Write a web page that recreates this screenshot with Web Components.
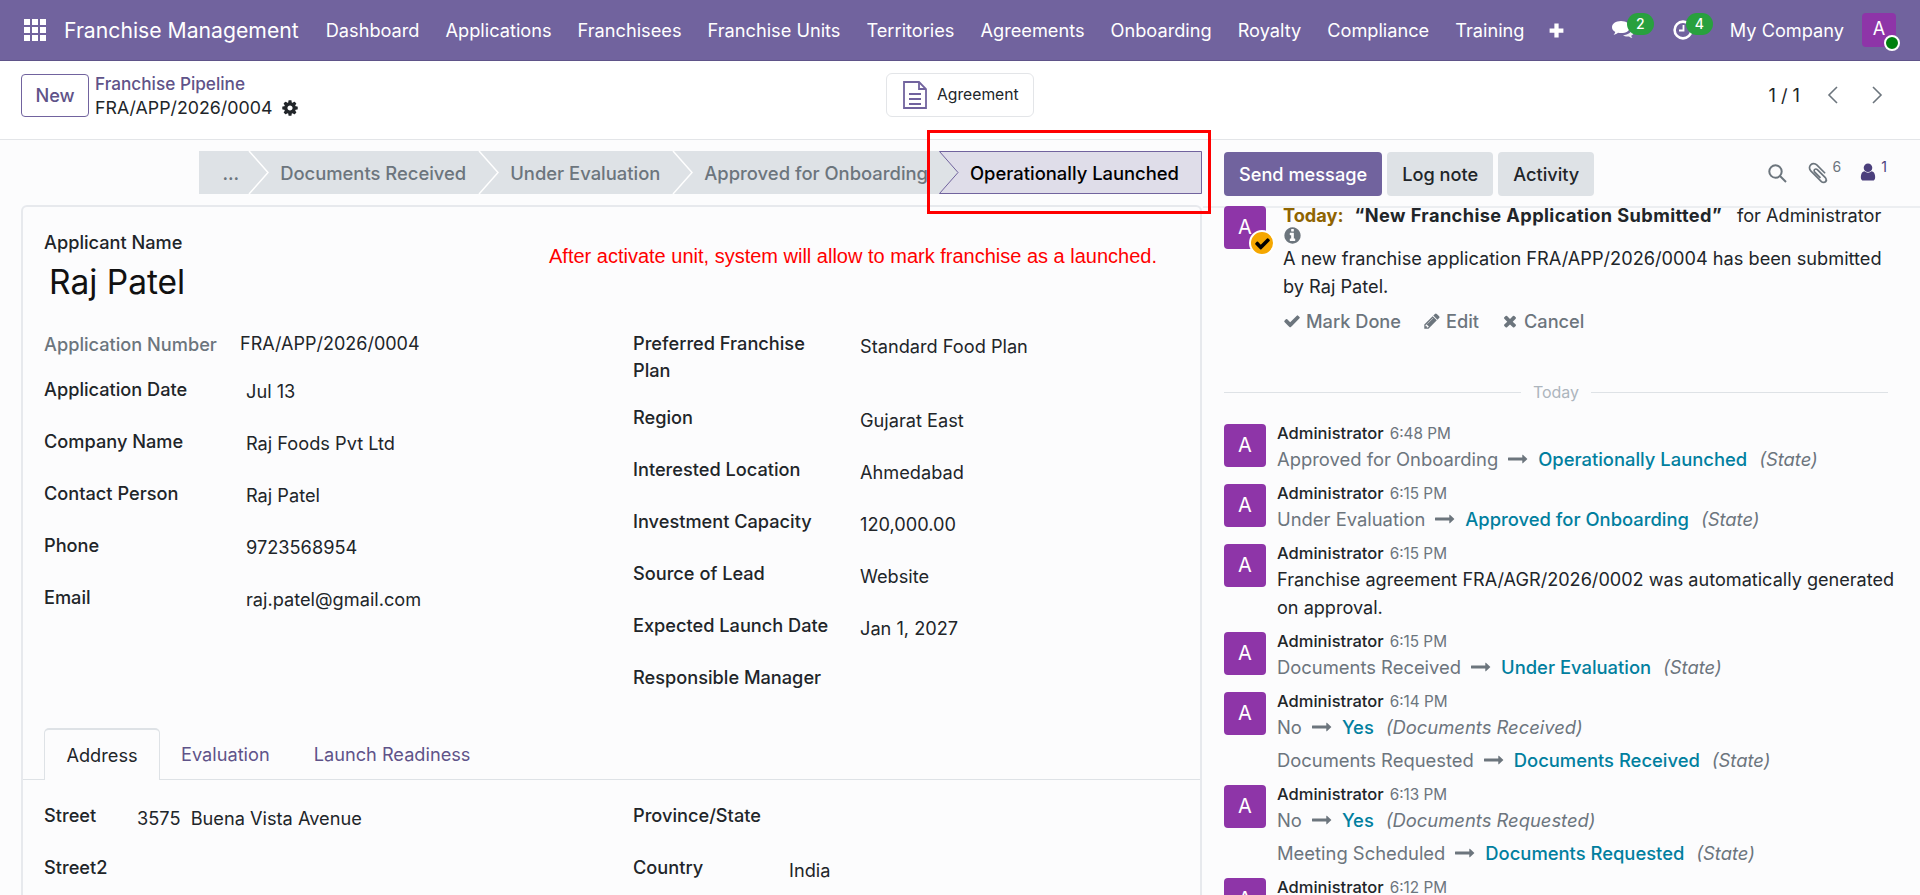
<!DOCTYPE html>
<html lang="en">
<head>
<meta charset="utf-8">
<title>Franchise Management</title>
<style>
  html, body { margin: 0; height: 100%; }
  body {
    height: 895px;
    overflow: hidden;
    background: #fcfcfd;
    color: #212529;
    font: 400 18.2px/26px Inter, "Liberation Sans", sans-serif;
  }
</style>
</head>
<body>
<fr-app>
  <fr-navbar slot="navbar">
    <fr-nav-item>Dashboard</fr-nav-item>
    <fr-nav-item>Applications</fr-nav-item>
    <fr-nav-item>Franchisees</fr-nav-item>
    <fr-nav-item>Franchise Units</fr-nav-item>
    <fr-nav-item>Territories</fr-nav-item>
    <fr-nav-item>Agreements</fr-nav-item>
    <fr-nav-item>Onboarding</fr-nav-item>
    <fr-nav-item>Royalty</fr-nav-item>
    <fr-nav-item>Compliance</fr-nav-item>
    <fr-nav-item>Training</fr-nav-item>
  </fr-navbar>
  <fr-control-panel slot="panel"></fr-control-panel>

  <fr-form slot="form">
    <fr-statusbar>
      <fr-step>...</fr-step>
      <fr-step>Documents Received</fr-step>
      <fr-step>Under Evaluation</fr-step>
      <fr-step>Approved for Onboarding</fr-step>
      <fr-step active>Operationally Launched</fr-step>
    </fr-statusbar>
    <fr-sheet>
      <fr-group slot="left">
        <fr-field label="Application Number" muted height="45" width="196" flat>FRA/APP/2026/0004</fr-field>
        <fr-field label="Application Date" width="202">Jul 13</fr-field>
        <fr-field label="Company Name" width="202">Raj Foods Pvt Ltd</fr-field>
        <fr-field label="Contact Person" width="202">Raj Patel</fr-field>
        <fr-field label="Phone" width="202">9723568954</fr-field>
        <fr-field label="Email" width="202">raj.patel@gmail.com</fr-field>
      </fr-group>
      <fr-group slot="right" raised>
        <fr-field label="Preferred Franchise Plan" height="74" width="227" tall>Standard Food Plan</fr-field>
        <fr-field label="Region" width="227">Gujarat East</fr-field>
        <fr-field label="Interested Location" width="227">Ahmedabad</fr-field>
        <fr-field label="Investment Capacity" width="227">120,000.00</fr-field>
        <fr-field label="Source of Lead" width="227">Website</fr-field>
        <fr-field label="Expected Launch Date" width="227">Jan 1, 2027</fr-field>
        <fr-field label="Responsible Manager" width="227"></fr-field>
      </fr-group>
      <fr-group slot="tab-left" raised>
        <fr-field label="Street" width="93">3575&nbsp; Buena Vista Avenue</fr-field>
        <fr-field label="Street2" width="93"></fr-field>
      </fr-group>
      <fr-group slot="tab-right" raised>
        <fr-field label="Province/State" width="156"></fr-field>
        <fr-field label="Country" width="156">India</fr-field>
      </fr-group>
    </fr-sheet>
  </fr-form>

  <fr-chatter slot="chatter">
    <fr-activity></fr-activity>
    <fr-divider>Today</fr-divider>
    <fr-message time="6:48 PM"><fr-change from="Approved for Onboarding" to="Operationally Launched" field="State"></fr-change></fr-message>
    <fr-message time="6:15 PM"><fr-change from="Under Evaluation" to="Approved for Onboarding" field="State"></fr-change></fr-message>
    <fr-message time="6:15 PM">Franchise agreement FRA/AGR/2026/0002 was automatically generated on approval.</fr-message>
    <fr-message time="6:15 PM"><fr-change from="Documents Received" to="Under Evaluation" field="State"></fr-change></fr-message>
    <fr-message time="6:14 PM">
      <fr-change from="No" to="Yes" field="Documents Received"></fr-change>
      <fr-change from="Documents Requested" to="Documents Received" field="State"></fr-change>
    </fr-message>
    <fr-message time="6:13 PM">
      <fr-change from="No" to="Yes" field="Documents Requested"></fr-change>
      <fr-change from="Meeting Scheduled" to="Documents Requested" field="State"></fr-change>
    </fr-message>
    <fr-message time="6:12 PM"></fr-message>
  </fr-chatter>
</fr-app>

<script>
// font awesome 4 shapes on a 1792 box, the rest drawn by hand
const FA = {
  check: 'M1671 566q0 40-28 68l-724 724-136 136q-28 28-68 28t-68-28l-136-136-362-362q-28-28-28-68t28-68l136-136q28-28 68-28t68 28l294 295 656-657q28-28 68-28t68 28l136 136q28 28 28 68z',
  times: 'M1490 1322q0 40-28 68l-136 136q-28 28-68 28t-68-28l-294-294-294 294q-28 28-68 28t-68-28l-136-136q-28-28-28-68t28-68l294-294-294-294q-28-28-28-68t28-68l136-136q28-28 68-28t68 28l294 294 294-294q28-28 68-28t68 28l136 136q28 28 28 68t-28 68l-294 294 294 294q28 28 28 68z',
  pencil: 'M491 1536l91-91-235-235-91 91v107h128v128h107zm523-928q0-22-22-22-10 0-17 7l-542 542q-7 7-7 17 0 22 22 22 10 0 17-7l542-542q7-7 7-17zm-54-192l416 416-832 832h-416v-416zm683 96q0 53-37 90l-166 166-416-416 166-165q36-38 90-38 53 0 91 38l235 234q37 39 37 91z',
  cog: 'M1152 896q0-106-75-181t-181-75-181 75-75 181 75 181 181 75 181-75 75-181zm512-109v222q0 12-8 23t-20 13l-185 28q-19 54-39 91 35 50 107 138 10 12 10 25t-9 23q-27 37-99 108t-94 71q-12 0-26-9l-138-108q-44 23-91 38-16 136-29 186-7 28-36 28h-222q-14 0-24.500-8.500t-11.500-21.500l-28-184q-49-16-90-37l-141 107q-10 9-25 9-14 0-25-11-126-114-165-168-7-10-7-23 0-12 8-23 15-21 51-66.500t54-70.500q-27-50-41-99l-183-27q-13-2-21-12.500t-8-23.500v-222q0-12 8-23t19-13l186-28q14-46 39-92-40-57-107-138-10-12-10-24 0-10 9-23 26-36 98.500-107.500t94.500-71.500q13 0 26 10l138 107q44-23 91-38 16-136 29-186 7-28 36-28h222q14 0 24.500 8.500t11.500 21.500l28 184q49 16 90 37l142-107q9-9 24-9 13 0 25 10 129 119 165 170 7 8 7 22 0 12-8 23-15 21-51 66.500t-54 70.500q26 50 41 98l183 28q13 2 21 12.500t8 23.500z',
  info: 'M1152 1376v-160q0-14-9-23t-23-9h-96v-512q0-14-9-23t-23-9h-320q-14 0-23 9t-9 23v160q0 14 9 23t23 9h96v320h-96q-14 0-23 9t-9 23v160q0 14 9 23t23 9h448q14 0 23-9t9-23zm-128-896v-160q0-14-9-23t-23-9h-192q-14 0-23 9t-9 23v160q0 14 9 23t23 9h192q14 0 23-9t9-23zm640 416q0 209-103 385.500t-279.500 279.500-385.500 103-385.500-103-279.500-279.500-103-385.500 103-385.500 279.500-279.500 385.500-103 385.500 103 279.500 279.500 103 385.500z',
  arrow: 'M1728 893q0 14-10 24l-384 354q-16 14-35 6-19-9-19-29v-224h-1248q-14 0-23-9t-9-23v-192q0-14 9-23t23-9h1248v-224q0-21 19-29t35 5l384 350q10 10 10 24z',
  clip: 'M1596 1385q0 117-79 196t-196 79q-135 0-235-100l-777-776q-113-115-113-271 0-159 110-270t269-111q158 0 273 113l605 606q10 10 10 22 0 16-30.500 46.500t-46.500 30.500q-13 0-23-10l-606-607q-79-77-181-77-106 0-179 75t-73 181q0 105 76 181l776 777q63 63 134 63 57 0 95-38t38-95q0-71-63-134l-581-581q-26-24-60-24-29 0-48 19t-19 48q0 32 25 59l410 410q10 10 10 22 0 16-31 47t-47 31q-12 0-22-10l-410-410q-63-61-63-149 0-82 57-139t139-57q88 0 149 63l581 581q100 98 100 235z',
  user: 'M1536 1399q0 109-62.500 187t-150.500 78h-854q-88 0-150.500-78t-62.500-187q0-85 8.500-160.500t31.500-152 58.500-131 94-89 134.500-34.500q131 128 313 128t313-128q76 0 134.500 34.500t94 89 58.500 131 31.500 152 8.500 160.500zm-256-887q0 159-112.500 271.500t-271.500 112.500-271.500-112.500-112.500-271.500 112.500-271.500 271.500-112.500 271.500 112.500 112.500 271.500z'
};

const fa = (name, size, color) =>
  `<svg width="${size}" height="${size}" viewBox="0 0 1792 1792" fill="${color}" style="display:block;flex:none"><path d="${FA[name]}"/></svg>`;

class FrApp extends HTMLElement {
  constructor() {
    super();
    this.attachShadow({ mode: 'open' });
    this.shadowRoot.innerHTML = `
      <style>
        :host { display: block; position: relative; height: 895px; overflow: hidden; }
        .content { display: flex; height: 756px; }
        .form { flex: none; width: 1203px; }
        .chatter { flex: 1; min-width: 0; }
        .callout {
          position: absolute; left: 927px; top: 130px; width: 278px; height: 78px;
          border: 3px solid #ff0000; pointer-events: none;
        }
      </style>
      <slot name="navbar"></slot>
      <slot name="panel"></slot>
      <div class="content">
        <div class="form"><slot name="form"></slot></div>
        <div class="chatter"><slot name="chatter"></slot></div>
      </div>
      <div class="callout"></div>
    `;
  }
}

class FrNavbar extends HTMLElement {
  constructor() {
    super();
    this.attachShadow({ mode: 'open' });
    this.shadowRoot.innerHTML = `
      <style>
        :host {
          display: flex; align-items: center; box-sizing: border-box; height: 61px;
          padding: 0 24px; background: #71639e; color: #fff;
          border-bottom: 1px solid #5f5389;
        }
        .apps { display: grid; grid-template-columns: repeat(3, 6px); gap: 2px; margin-right: 18px; }
        .apps i { height: 6px; background: #fff; }
        .brand { font-size: 21.2px; margin-right: 27px; white-space: nowrap; }
        nav { display: flex; gap: 26px; white-space: nowrap; }
        .plus { margin-left: 24px; }
        .right { display: flex; align-items: center; margin-left: auto; }
        .ico { position: relative; display: block; }
        .badge {
          position: absolute; top: -7px; min-width: 27px; height: 22px; border-radius: 11px;
          background: #28a03e; color: #fff; font-size: 14px; font-weight: 500; line-height: 21px; text-align: center;
        }
        .chat { width: 24px; height: 20px; margin-right: 38px; }
        .chat .badge { left: 16px; }
        .clock { width: 20px; height: 20px; margin-right: 37px; }
        .clock .badge { left: 13px; }
        .company { margin-right: 18px; white-space: nowrap; }
        .avatar {
          position: relative; width: 34px; height: 34px; border-radius: 4px; background: #8e35a8;
          text-align: center; line-height: 32px; font-size: 18px;
        }
        .dot {
          position: absolute; right: -4px; bottom: -4px; width: 12px; height: 12px;
          border: 2px solid #fff; border-radius: 50%; background: #00800f;
        }
      </style>
      <div class="apps">${'<i></i>'.repeat(9)}</div>
      <div class="brand">Franchise Management</div>
      <nav><slot></slot></nav>
      <svg class="plus" width="17" height="17" viewBox="0 0 16 16" fill="#fff"><path d="M6 1.500h4V6h4.500v4H10v4.500H6V10H1.500V6H6z"/></svg>
      <div class="right">
        <span class="ico chat">
          <svg width="24" height="20" viewBox="0 0 24 20" fill="#fff">
            <path d="M10 1C4.800 1 1 3.800 1 7.200c0 2 1.300 3.700 3.300 4.800-.3 1-.9 1.900-1.700 2.700 1.700-.2 3.200-.9 4.400-1.900 1 .2 2 .3 3 .3 5.200 0 9-2.700 9-5.900S15.200 1 10 1z"/>
            <path d="M21 8.200c.3 3.600-3.700 6.700-9 7 1.100.9 2.600 1.400 4.300 1.400.6 0 1.200 0 1.700-.2.900.8 2.100 1.400 3.500 1.600-.7-.7-1.100-1.400-1.300-2.200 1.700-.8 2.800-2.200 2.800-3.800 0-1.600-1-3-2-3.800z" opacity=".9"/>
          </svg>
          <span class="badge">2</span>
        </span>
        <span class="ico clock">
          <svg width="20" height="20" viewBox="0 0 20 20" fill="none" stroke="#fff" stroke-width="2.600"><circle cx="10" cy="10" r="8.400"/><path d="M10.500 5v5.500H6" stroke-width="1.800"/></svg>
          <span class="badge">4</span>
        </span>
        <span class="company">My Company</span>
        <span class="avatar">A<span class="dot"></span></span>
      </div>
    `;
  }
}

class FrNavItem extends HTMLElement {
  constructor() {
    super();
    this.attachShadow({ mode: 'open' });
    this.shadowRoot.innerHTML = `<style>:host { display: block; }</style><slot></slot>`;
  }
}

class FrControlPanel extends HTMLElement {
  constructor() {
    super();
    this.attachShadow({ mode: 'open' });
    this.shadowRoot.innerHTML = `
      <style>
        :host {
          display: grid; grid-template-columns: 1fr auto 1fr; align-items: center; box-sizing: border-box;
          height: 79px; padding: 10px 0 23px; background: #fff; border-bottom: 1px solid #e3e5e8;
        }
        .left { display: flex; align-items: center; gap: 6px; padding-left: 21px; }
        .new {
          box-sizing: border-box; width: 68px; height: 43px; border: 1px solid #71639e; border-radius: 4px;
          color: #5f5389; font-weight: 500; display: flex; align-items: center; justify-content: center;
        }
        .crumb { color: #5f5389; font-size: 17.200px; font-weight: 500; line-height: 24px; margin-top: 1px; }
        .rec { display: flex; align-items: center; gap: 9px; font-size: 17.800px; line-height: 23px; }
        .agreement {
          box-sizing: border-box; display: flex; align-items: center; gap: 9px; width: 148px; height: 44px;
          padding-left: 15px; border: 1px solid #e3e5e8; border-radius: 6px; font-size: 15.700px;
        }
        .pager { display: flex; align-items: center; justify-self: end; padding-right: 35px; white-space: nowrap; }
        .pager svg { margin-left: 26px; }
        .pager svg:first-of-type { margin-left: 25px; }
      </style>
      <div class="left">
        <div class="new">New</div>
        <div>
          <div class="crumb">Franchise Pipeline</div>
          <div class="rec">FRA/APP/2026/0004 ${fa('cog', 18, '#212529')}</div>
        </div>
      </div>
      <div class="agreement">
        <svg width="26" height="28" viewBox="0 0 26 28" fill="none" stroke="#71639e" stroke-width="1.800">
          <path d="M2 1h15l7 7v19H2z"/><path d="M17 1v7h7"/><path d="M7 13h12M7 18h12M7 23h12"/>
        </svg>
        <span>Agreement</span>
      </div>
      <div class="pager">
        1 / 1
        <svg width="17" height="20" viewBox="0 0 17 20" fill="none" stroke="#6c757d" stroke-width="1.600"><path d="M12 2 4 10l8 8"/></svg>
        <svg width="17" height="20" viewBox="0 0 17 20" fill="none" stroke="#6c757d" stroke-width="1.600"><path d="m5 2 8 8-8 8"/></svg>
      </div>
    `;
  }
}

class FrForm extends HTMLElement {
  constructor() {
    super();
    this.attachShadow({ mode: 'open' });
    this.shadowRoot.innerHTML = `
      <style>:host { display: block; padding-top: 11px; }</style>
      <slot></slot>
    `;
  }
}

class FrStatusbar extends HTMLElement {
  constructor() {
    super();
    this.attachShadow({ mode: 'open' });
    this.shadowRoot.innerHTML = `
      <style>
        :host { display: flex; justify-content: flex-end; height: 43px; margin: 0 1px 11px 0; }
        .bar { display: flex; background: #dee2e6; }
      </style>
      <div class="bar"><slot></slot></div>
    `;
  }
}

class FrStep extends HTMLElement {
  constructor() {
    super();
    this.attachShadow({ mode: 'open' });
    this.shadowRoot.innerHTML = `
      <style>
        :host {
          position: relative; display: flex; align-items: center; box-sizing: border-box; height: 43px;
          padding: 0 13px 0 31px; color: #6c757d; font-size: 18.400px; font-weight: 500; white-space: nowrap;
        }
        :host(:first-child) { padding: 0 10px 0 23px; }
        :host(:nth-child(4)) { padding-right: 11px; }
        :host([active]) { color: #000; padding: 0 0 0 31px; width: 263px; }
        svg { position: absolute; left: 0; top: 0; overflow: visible; }
        span { position: relative; }
      </style>
      <span><slot></slot></span>
    `;
  }

  connectedCallback() {
    if (this.previousElementSibling === null) return;
    const ns = 'http://www.w3.org/2000/svg';
    const svg = document.createElementNS(ns, 'svg');
    const active = this.hasAttribute('active');
    const w = active ? 263 : 20;
    svg.setAttribute('width', w);
    svg.setAttribute('height', 43);
    const shape = document.createElementNS(ns, active ? 'polygon' : 'polyline');
    if (active) {
      shape.setAttribute('points', `0.5,0.5 ${w - 0.5},0.5 ${w - 0.5},42.500 0.5,42.500 19,21.500`);
      shape.setAttribute('fill', '#dfdde9');
      shape.setAttribute('stroke', '#71639e');
    } else {
      shape.setAttribute('points', '0,0 19,21.500 0,43');
      shape.setAttribute('fill', 'none');
      shape.setAttribute('stroke', '#fff');
      shape.setAttribute('stroke-width', '1.500');
    }
    svg.appendChild(shape);
    this.shadowRoot.insertBefore(svg, this.shadowRoot.querySelector('span'));
  }
}

class FrSheet extends HTMLElement {
  constructor() {
    super();
    this.attachShadow({ mode: 'open' });
    this.shadowRoot.innerHTML = `
      <style>
        :host {
          display: block; margin-left: 21px; box-sizing: border-box; width: 1181px; height: 700px;
          border: 1px solid #e7e9ed; border-width: 2px 2px 0 2px; border-radius: 6px 6px 0 0; background: #fcfcfd;
        }
        .title { display: flex; height: 77px; padding: 22px 0 0 21px; }
        .name { width: 505px; }
        .name b { display: block; font-weight: 500; }
        .name strong { display: block; margin: 4px 0 0 5px; font-weight: 400; font-size: 33.500px; line-height: 46px; color: #111; }
        .note { padding-top: 16px; font: 20px/22px "Liberation Sans", Arial, sans-serif; color: #ff0000; white-space: nowrap; }
        .groups { display: grid; grid-template-columns: 589px 1fr; padding-left: 21px; }
        .top { margin-top: 25px; }
        .tabs { display: flex; height: 51px; margin-top: 12px; padding-left: 21px; border-bottom: 1px solid #dee2e6; }
        .tab { display: flex; align-items: center; padding: 0 22px; color: #5f5389; }
        .tab.on {
          box-sizing: border-box; height: 52px; width: 116px; padding: 0; justify-content: center; color: #212529; background: #fcfcfd;
          border: 1px solid #dee2e6; border-top-width: 2px; border-bottom: 0; border-radius: 5px 5px 0 0;
        }
        .tab:nth-child(2) { padding-left: 21px; }
        .under { margin-top: 23px; }
      </style>
      <div class="title">
        <div class="name"><b>Applicant Name</b><strong>Raj Patel</strong></div>
        <div class="note">After activate unit, system will allow to mark franchise as a launched.</div>
      </div>
      <div class="groups top"><slot name="left"></slot><slot name="right"></slot></div>
      <div class="tabs">
        <div class="tab on">Address</div>
        <div class="tab">Evaluation</div>
        <div class="tab">Launch Readiness</div>
      </div>
      <div class="groups under"><slot name="tab-left"></slot><slot name="tab-right"></slot></div>
    `;
  }
}

class FrGroup extends HTMLElement {
  constructor() {
    super();
    this.attachShadow({ mode: 'open' });
    this.shadowRoot.innerHTML = `
      <style>
        :host { display: block; --value-top: 2px; }
        :host([raised]) { margin-top: -1px; --value-top: 3px; }
      </style>
      <slot></slot>
    `;
  }
}

class FrField extends HTMLElement {
  constructor() {
    super();
    this.attachShadow({ mode: 'open' });
    this.shadowRoot.innerHTML = `
      <style>
        :host { display: flex; box-sizing: border-box; height: 52px; }
        .label { flex: none; font-weight: 500; box-sizing: border-box; padding-right: 16px; }
        .value { padding-top: var(--value-top); white-space: nowrap; }
        :host([muted]) .label { color: #6c757d; }
        :host([flat]) .value { padding-top: 0; font-size: 18px; }
        :host([tall]) .label { line-height: 27px; }
      </style>
      <div class="label"></div>
      <div class="value"><slot></slot></div>
    `;
  }

  connectedCallback() {
    const label = this.shadowRoot.querySelector('.label');
    label.textContent = this.getAttribute('label');
    label.style.width = this.getAttribute('width') + 'px';
    if (this.hasAttribute('height')) this.style.height = this.getAttribute('height') + 'px';
  }
}

class FrChatter extends HTMLElement {
  constructor() {
    super();
    this.attachShadow({ mode: 'open' });
    this.shadowRoot.innerHTML = `
      <style>
        :host { display: block; height: 756px; overflow: hidden; }
        .top {
          display: flex; align-items: flex-start; box-sizing: border-box; height: 68px; padding: 12px 0 0 21px;
          border-bottom: 2px solid #eceef1;
        }
        .btn {
          box-sizing: border-box; height: 44px; padding: 0 15px; margin-right: 5px; border-radius: 4px;
          display: flex; align-items: center; background: #dee2e6; font-weight: 500; white-space: nowrap;
        }
        .btn.primary { background: #71639e; color: #fff; }
        .tools { display: flex; align-items: flex-start; margin-left: auto; padding: 9px 0 0 0; color: #6c757d; }
        .tools sup { font-size: 14px; line-height: 16px; margin: -2px 0 0 3px; }
        .search { margin-right: 19px; margin-top: 3px; }
        .clip { display: flex; margin-right: 17px; }
        .who { display: flex; margin-right: 33px; margin-top: 1px; }
        .who sup { color: #4b3f7c; margin-top: -3px; }
        .list { padding: 0 0 0 21px; margin-top: -2px; }
      </style>
      <div class="top">
        <div class="btn primary">Send message</div>
        <div class="btn">Log note</div>
        <div class="btn">Activity</div>
        <div class="tools">
          <svg class="search" width="19" height="19" viewBox="0 0 19 19" fill="none" stroke="#6c757d" stroke-width="2"><circle cx="7.500" cy="7.500" r="6.200"/><path d="m12 12 6 6"/></svg>
          <span class="clip">${fa('clip', 24, '#6c757d')}<sup>6</sup></span>
          <span class="who">${fa('user', 20, '#4b3f7c')}<sup>1</sup></span>
        </div>
      </div>
      <div class="list"><slot></slot></div>
    `;
  }
}

class FrActivity extends HTMLElement {
  constructor() {
    super();
    this.attachShadow({ mode: 'open' });
    this.shadowRoot.innerHTML = `
      <style>
        :host { display: flex; gap: 17px; padding-right: 25px; }
        .avatar {
          position: relative; flex: none; width: 42px; height: 43px; border-radius: 4px; background: #8e35a8;
          color: #fff; text-align: center; font-size: 20px; line-height: 42px;
        }
        .tick {
          position: absolute; right: -9px; bottom: -7px; width: 22px; height: 22px; border-radius: 50%;
          background: #f5a700; border: 2px solid #fff; display: flex; align-items: center; justify-content: center;
        }
        .body { min-width: 0; margin-top: -4px; }
        .head { white-space: nowrap; }
        .today { color: #8f6400; font-weight: 700; margin-right: 11px; }
        .sum { font-weight: 700; margin-right: 15px; letter-spacing: .4px; }
        .info { margin: -1px 0 1px; height: 16px; display: flex; align-items: center; }
        .text { line-height: 28px; }
        .actions { display: flex; gap: 22px; margin-top: 8px; color: #6c757d; font-weight: 500; }
        .actions span { display: flex; align-items: center; gap: 5px; }
      </style>
      <div class="avatar">A<span class="tick">${fa('check', 17, '#000')}</span></div>
      <div class="body">
        <div class="head"><span class="today">Today:</span><span class="sum">“New Franchise Application Submitted”</span>for Administrator</div>
        <div class="info">${fa('info', 19, '#6c757d')}</div>
        <div class="text">A new franchise application FRA/APP/2026/0004 has been submitted by Raj Patel.</div>
        <div class="actions">
          <span>${fa('check', 18, '#6c757d')}Mark Done</span>
          <span>${fa('pencil', 18, '#6c757d')}Edit</span>
          <span>${fa('times', 18, '#6c757d')}Cancel</span>
        </div>
      </div>
    `;
  }
}

class FrDivider extends HTMLElement {
  constructor() {
    super();
    this.attachShadow({ mode: 'open' });
    this.shadowRoot.innerHTML = `
      <style>
        :host {
          display: flex; align-items: center; gap: 12px; height: 26px; margin: 45px 32px 19px 0;
          color: #adb5bd; font-size: 16px;
        }
        i { flex: 1; height: 1px; background: #dee2e6; }
      </style>
      <i></i><slot></slot><i></i>
    `;
  }
}

class FrMessage extends HTMLElement {
  constructor() {
    super();
    this.attachShadow({ mode: 'open' });
    this.shadowRoot.innerHTML = `
      <style>
        :host { display: flex; gap: 11px; padding: 0 14px 11px 0; }
        .avatar {
          flex: none; width: 42px; height: 43px; border-radius: 4px; background: #8e35a8;
          color: #fff; text-align: center; font-size: 20px; line-height: 42px;
        }
        .head { display: flex; align-items: baseline; gap: 6px; height: 19px; line-height: 19px; font-size: 16.500px; font-weight: 500; white-space: nowrap; }
        .time { color: #6c757d; font-size: 15.300px; font-weight: 400; }
        .text { margin-top: 2px; font-size: 18.100px; line-height: 28px; }
      </style>
      <div class="avatar">A</div>
      <div>
        <div class="head"><span>Administrator</span><span class="time"></span></div>
        <div class="text"><slot></slot></div>
      </div>
    `;
  }

  connectedCallback() {
    this.shadowRoot.querySelector('.time').textContent = this.getAttribute('time');
  }
}

class FrChange extends HTMLElement {
  constructor() {
    super();
    this.attachShadow({ mode: 'open' });
    this.shadowRoot.innerHTML = `
      <style>
        :host { display: flex; align-items: center; height: 28px; font-size: 18.400px; white-space: nowrap; color: #6c757d; }
        :host(:not(:first-child)) { margin-top: 5px; }
        svg { margin: 0 10px; }
        .to { color: #017f9f; font-weight: 500; margin-right: 12px; }
        em { font-style: italic; }
      </style>
      <span class="from"></span>${fa('arrow', 20, '#6c757d')}<span class="to"></span><em></em>
    `;
  }

  connectedCallback() {
    const root = this.shadowRoot;
    root.querySelector('.from').textContent = this.getAttribute('from');
    root.querySelector('.to').textContent = this.getAttribute('to');
    root.querySelector('em').textContent = '(' + this.getAttribute('field') + ')';
  }
}

customElements.define('fr-app', FrApp);
customElements.define('fr-navbar', FrNavbar);
customElements.define('fr-nav-item', FrNavItem);
customElements.define('fr-control-panel', FrControlPanel);
customElements.define('fr-form', FrForm);
customElements.define('fr-statusbar', FrStatusbar);
customElements.define('fr-step', FrStep);
customElements.define('fr-sheet', FrSheet);
customElements.define('fr-group', FrGroup);
customElements.define('fr-field', FrField);
customElements.define('fr-chatter', FrChatter);
customElements.define('fr-activity', FrActivity);
customElements.define('fr-divider', FrDivider);
customElements.define('fr-message', FrMessage);
customElements.define('fr-change', FrChange);
</script>
</body>
</html>
